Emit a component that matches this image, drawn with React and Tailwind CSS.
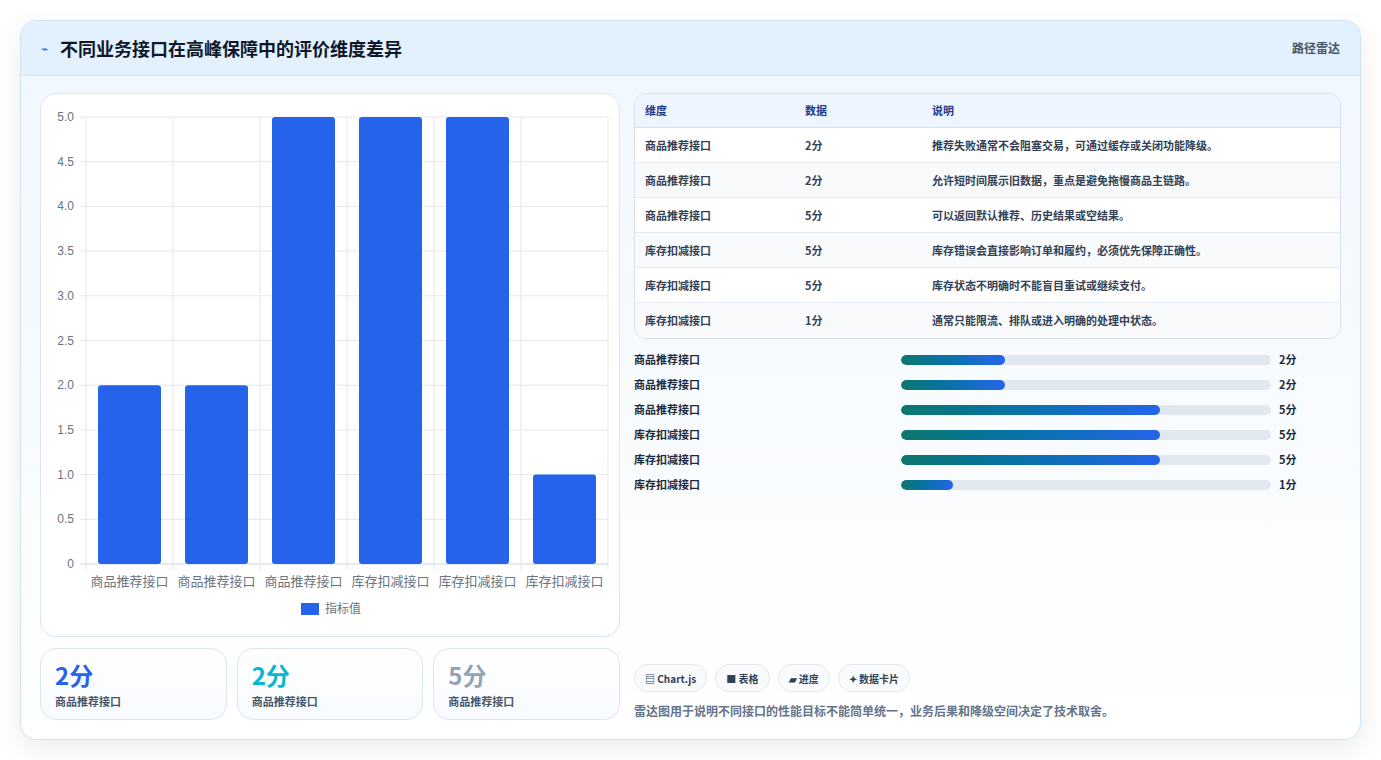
const rows = [
  ['商品推荐接口', '2分', '推荐失败通常不会阻塞交易，可通过缓存或关闭功能降级。', 2],
  ['商品推荐接口', '2分', '允许短时间展示旧数据，重点是避免拖慢商品主链路。', 2],
  ['商品推荐接口', '5分', '可以返回默认推荐、历史结果或空结果。', 5],
  ['库存扣减接口', '5分', '库存错误会直接影响订单和履约，必须优先保障正确性。', 5],
  ['库存扣减接口', '5分', '库存状态不明确时不能盲目重试或继续支付。', 5],
  ['库存扣减接口', '1分', '通常只能限流、排队或进入明确的处理中状态。', 1],
]

function Chart() {
  const top = 23, bottom = 470, left = 45, right = 567
  const h = bottom - top
  const cw = (right - left) / 6
  const ticks = [0, 0.5, 1, 1.5, 2, 2.5, 3, 3.5, 4, 4.5, 5]
  return (
    <svg width="578" height="542" className="block" style={{ fontFamily: '"Liberation Sans","Noto Sans CJK SC",sans-serif' }}>
      {ticks.map(t => {
        const y = bottom - (t / 5) * h
        return (
          <g key={t}>
            <line x1={left - 6} x2={right} y1={y} y2={y} stroke={t === 0 ? '#cbd5e1' : '#e5e7eb'} />
            <text x={left - 12} y={y + 4} textAnchor="end" fontSize="12" fill="#6b7280">{t === 0 ? '0' : t.toFixed(1)}</text>
          </g>
        )
      })}
      {Array.from({ length: 7 }).map((_, i) => (
        <line key={i} x1={left + i * cw} x2={left + i * cw} y1={top} y2={bottom + 6} stroke="#e5e7eb" />
      ))}
      {rows.map((r, i) => {
        const bh = (r[3] / 5) * h
        return (
          <g key={i}>
            <rect x={left + i * cw + 12} y={bottom - bh} width={cw - 24} height={bh} rx="3" fill="#2563eb" />
            <text x={left + i * cw + cw / 2} y={bottom + 22} textAnchor="middle" fontSize="13" fill="#6b7280">{r[0]}</text>
          </g>
        )
      })}
      <rect x="260" y="509" width="18" height="12" fill="#2563eb" />
      <text x="284" y="519" fontSize="12" fill="#6b7280">指标值</text>
    </svg>
  )
}

export default function App() {
  return (
    <div className="min-h-screen bg-white p-5" style={{ fontFamily: '"Noto Sans CJK SC","Liberation Sans",sans-serif' }}>
      <div className="h-[720px] rounded-2xl border border-[#cfe3f3] bg-gradient-to-b from-[#f0f7fe] to-white shadow-[0_10px_30px_rgba(15,23,42,0.08)] overflow-hidden flex flex-col">
        <div className="h-[55px] shrink-0 flex items-center justify-between px-5 bg-[#e3f0fd] border-b border-[#d6e6f5]">
          <div className="flex items-center gap-3">
            <span className="text-[#2563eb] text-xs">⌁</span>
            <h1 className="text-[18px] font-bold text-[#0f172a]">不同业务接口在高峰保障中的评价维度差异</h1>
          </div>
          <span className="text-xs font-semibold text-[#475569]">路径雷达</span>
        </div>
        <div className="flex-1 flex gap-[14px] px-[19px] pt-[17px] pb-[19px]">
          <div className="w-[580px] flex flex-col gap-[11px]">
            <div className="h-[544px] rounded-2xl border border-[#dbe5f0] bg-white">
              <Chart />
            </div>
            <div className="flex gap-[10px] flex-1">
              {[['2分', 'text-[#2563eb]'], ['2分', 'text-[#06b6d4]'], ['5分', 'text-[#94a3b8]']].map(([v, c], i) => (
                <div key={i} className="flex-1 rounded-2xl border border-[#dbe5f0] bg-gradient-to-b from-white to-[#f8fbff] px-[14px] pt-[10px]">
                  <div className={`text-[24px] font-bold leading-8 ${c}`}>{v}</div>
                  <div className="text-[11px] font-semibold text-[#475569] mt-0.5">商品推荐接口</div>
                </div>
              ))}
            </div>
          </div>
          <div className="flex-1 flex flex-col">
            <div className="rounded-xl border border-[#d6e1ec] bg-white overflow-hidden">
              <div className="h-[34px] flex items-center bg-[#eef5fe] border-b border-[#d6e1ec] text-[11px] font-semibold text-[#1e3a8a]">
                <div className="w-[170px] pl-[10px]">维度</div>
                <div className="w-[127px]">数据</div>
                <div>说明</div>
              </div>
              {rows.map((r, i) => (
                <div key={i} className={`h-[35px] flex items-center text-[11px] font-semibold text-[#334155] ${i < 5 ? 'border-b border-[#e5ebf2]' : ''} ${i % 2 ? 'bg-[#f8fafc]' : 'bg-white'}`}>
                  <div className="w-[170px] pl-[10px]">{r[0]}</div>
                  <div className="w-[127px]">{r[1]}</div>
                  <div>{r[2]}</div>
                </div>
              ))}
            </div>
            <div className="mt-[8px] flex flex-col">
              {rows.map((r, i) => (
                <div key={i} className="h-[25px] flex items-center text-[11px] font-semibold text-[#1e293b]">
                  <div className="w-[267px]">{r[0]}</div>
                  <div className="w-[370px] h-[10px] rounded-full bg-[#e2e8f0] overflow-hidden">
                    <div className="h-full rounded-full bg-gradient-to-r from-[#0f766e] to-[#2563eb]" style={{ width: `${r[3] * 14}%` }} />
                  </div>
                  <div className="ml-2 font-bold">{r[1]}</div>
                </div>
              ))}
            </div>
            <div className="mt-auto">
              <div className="flex gap-2">
                {['▤ Chart.js', '■ 表格', '▰ 进度', '✦ 数据卡片'].map(t => (
                  <span key={t} className="h-[28px] px-[10px] flex items-center rounded-full border border-[#e2e8f0] bg-[#f8fafc] text-[10px] font-bold text-[#334155]">{t}</span>
                ))}
              </div>
              <p className="mt-[10px] text-[12px] font-semibold text-[#64748b]">雷达图用于说明不同接口的性能目标不能简单统一，业务后果和降级空间决定了技术取舍。</p>
            </div>
          </div>
        </div>
      </div>
    </div>
  )
}
